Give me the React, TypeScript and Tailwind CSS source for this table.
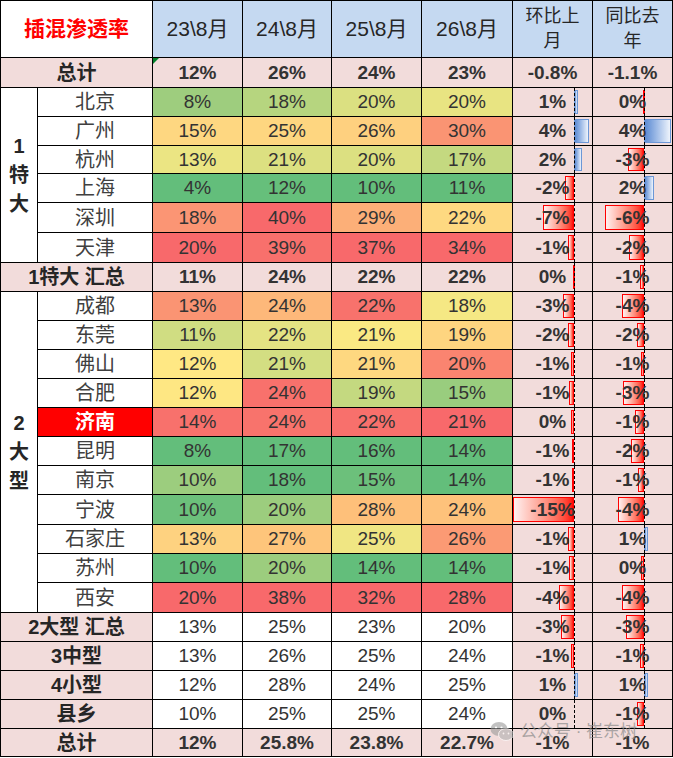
import React from 'react';

type Row = {
  label: string;
  vals: string[];
  colors?: string[];
  mom: string;
  yoy: string;
  momBar?: number;
  yoyBar?: number;
  h: number;
  red?: boolean;
};

// axis positions inside the two change columns (px from cell left)
const MOM_AXIS = 61;
const YOY_AXIS = 51;

const special: Row[] = [
  { label: '北京', vals: ['8%', '18%', '20%', '20%'], colors: ['#9ecd7e', '#b6d57f', '#dbe081', '#e8e482'], mom: '1%', yoy: '0%', momBar: 4, yoyBar: -1, h: 29 },
  { label: '广州', vals: ['15%', '25%', '26%', '30%'], colors: ['#fed781', '#fed680', '#fed07f', '#fa9473'], mom: '4%', yoy: '4%', momBar: 15, yoyBar: 27, h: 29 },
  { label: '杭州', vals: ['13%', '21%', '20%', '17%'], colors: ['#ebe583', '#dce081', '#dce081', '#c4d980'], mom: '2%', yoy: '-3%', momBar: 8, yoyBar: -16, h: 28 },
  { label: '上海', vals: ['4%', '12%', '10%', '11%'], colors: ['#63be7b', '#66bf7b', '#63be7b', '#63be7b'], mom: '-2%', yoy: '2%', momBar: -9, yoyBar: 10, h: 29 },
  { label: '深圳', vals: ['18%', '40%', '29%', '22%'], colors: ['#fb9574', '#f8696b', '#fcaf78', '#fed981'], mom: '-7%', yoy: '-6%', momBar: -31, yoyBar: -39, h: 30 },
  { label: '天津', vals: ['20%', '39%', '37%', '34%'], colors: ['#f8696b', '#f8706c', '#f8696b', '#f8696b'], mom: '-1%', yoy: '-2%', momBar: -6, yoyBar: -15, h: 30 },
];

const large: Row[] = [
  { label: '成都', vals: ['13%', '24%', '22%', '18%'], colors: ['#fa9473', '#fdb87a', '#f8726c', '#f5e884'], mom: '-3%', yoy: '-4%', momBar: -11, yoyBar: -22, h: 29 },
  { label: '东莞', vals: ['11%', '22%', '21%', '19%'], colors: ['#d0dd82', '#e4e383', '#fae983', '#fed580'], mom: '-2%', yoy: '-2%', momBar: -6, yoyBar: -7, h: 29 },
  { label: '佛山', vals: ['12%', '21%', '21%', '20%'], colors: ['#ffe884', '#d3de82', '#fed880', '#fa8470'], mom: '-1%', yoy: '-1%', momBar: -3, yoyBar: -3, h: 29 },
  { label: '合肥', vals: ['12%', '24%', '19%', '15%'], colors: ['#fee783', '#f8716c', '#c4d980', '#99cd7e'], mom: '-1%', yoy: '-3%', momBar: -5, yoyBar: -21, h: 29 },
  { label: '济南', vals: ['14%', '24%', '22%', '21%'], colors: ['#f8716c', '#f8736c', '#f8706c', '#f8696b'], mom: '0%', yoy: '-1%', momBar: -3, yoyBar: -9, h: 29, red: true },
  { label: '昆明', vals: ['8%', '17%', '16%', '14%'], colors: ['#63be7b', '#63be7b', '#63be7b', '#63be7b'], mom: '-1%', yoy: '-2%', momBar: -2, yoyBar: -13, h: 29 },
  { label: '南京', vals: ['10%', '18%', '15%', '14%'], colors: ['#9ccd7e', '#63be7b', '#6cc07b', '#63be7b'], mom: '-1%', yoy: '-1%', momBar: -2, yoyBar: -6, h: 29 },
  { label: '宁波', vals: ['10%', '20%', '28%', '24%'], colors: ['#6cc07b', '#9ccd7e', '#fec07a', '#fec27b'], mom: '-15%', yoy: '-4%', momBar: -61, yoyBar: -26, h: 30 },
  { label: '石家庄', vals: ['13%', '27%', '25%', '26%'], colors: ['#fed280', '#fec57b', '#f0e683', '#fb9a74'], mom: '-1%', yoy: '1%', momBar: -6, yoyBar: 4, h: 29 },
  { label: '苏州', vals: ['10%', '20%', '14%', '14%'], colors: ['#63be7b', '#9ccd7e', '#63be7b', '#63be7b'], mom: '-1%', yoy: '0%', momBar: -5, yoyBar: -3, h: 29 },
  { label: '西安', vals: ['20%', '38%', '32%', '28%'], colors: ['#f8696b', '#f8696b', '#f8696b', '#f8696b'], mom: '-4%', yoy: '-4%', momBar: -15, yoyBar: -22, h: 30 },
];

const lower: Row[] = [
  { label: '2大型 汇总', vals: ['13%', '25%', '23%', '20%'], mom: '-3%', yoy: '-3%', momBar: -13, yoyBar: -18, h: 29 },
  { label: '3中型', vals: ['13%', '26%', '25%', '24%'], mom: '-1%', yoy: '-1%', momBar: -3, yoyBar: -4, h: 29 },
  { label: '4小型', vals: ['12%', '28%', '24%', '25%'], mom: '1%', yoy: '1%', momBar: 4, yoyBar: 4, h: 29 },
  { label: '县乡', vals: ['10%', '25%', '25%', '24%'], mom: '0%', yoy: '-1%', momBar: 0, yoyBar: -7, h: 29 },
];

function BarCell({ text, bar, axis }: { text: string; bar?: number; axis?: number }) {
  return (
    <td className="relative border border-black bg-[#f2dcdb] p-0 text-center text-[19px] leading-[20px] font-bold text-[#333]">
      {axis !== undefined && bar !== undefined && bar < 0 && (
        <div
          className="absolute top-[2px] bottom-[2px] border border-[#ff0000] bg-linear-to-r from-[#fff0f0] to-[#ff0000]"
          style={{ left: axis + bar, width: -bar }}
        />
      )}
      {axis !== undefined && bar !== undefined && bar > 0 && (
        <div
          className="absolute top-[2px] bottom-[2px] border border-[#6c97d6] bg-linear-to-r from-[#5b8ad2] to-[#eef3fb]"
          style={{ left: axis, width: bar }}
        />
      )}
      {axis !== undefined && (
        <div className="absolute top-0 bottom-0 w-0 border-l border-dashed border-black" style={{ left: axis }} />
      )}
      <span className="relative">{text}</span>
    </td>
  );
}

function ValueCells({ row, bold }: { row: Row; bold?: boolean }) {
  return (
    <>
      {row.vals.map((v, i) => (
        <td
          key={i}
          className={`border border-black p-0 text-center text-[19px] leading-[20px] text-[#333] ${bold ? 'font-bold' : ''}`}
          style={{ backgroundColor: row.colors ? row.colors[i] : bold ? '#f2dcdb' : '#ffffff' }}
        >
          {v}
        </td>
      ))}
      <BarCell text={row.mom} bar={row.momBar} axis={row.momBar !== undefined ? MOM_AXIS : undefined} />
      <BarCell text={row.yoy} bar={row.yoyBar} axis={row.yoyBar !== undefined ? YOY_AXIS : undefined} />
    </>
  );
}

function CityRow({ row, group }: { row: Row; group?: React.ReactNode }) {
  return (
    <tr style={{ height: row.h }}>
      {group}
      <td
        className={`border border-black p-0 text-center text-[20px] leading-[22px] ${
          row.red ? 'bg-[#ff0000] font-bold text-white' : 'bg-white text-[#404040]'
        }`}
      >
        {row.label}
      </td>
      <ValueCells row={row} />
    </tr>
  );
}

function SumRow({ row, bold }: { row: Row; bold?: boolean }) {
  return (
    <tr style={{ height: row.h }}>
      <td colSpan={2} className="border border-black bg-[#f2dcdb] p-0 text-center text-[20px] leading-[22px] font-bold text-[#262626]">
        {row.label}
      </td>
      <ValueCells row={row} bold={bold} />
    </tr>
  );
}

function GroupCell({ span, lines }: { span: number; lines: string[] }) {
  return (
    <td rowSpan={span} className="border border-black bg-white p-0 text-center align-middle text-[20px] font-bold leading-[29px] text-[#262626]">
      {lines.map((l) => (
        <div key={l}>{l}</div>
      ))}
    </td>
  );
}

export default function App() {
  const total1: Row = { label: '总计', vals: ['12%', '26%', '24%', '23%'], mom: '-0.8%', yoy: '-1.1%', h: 30 };
  const sum1: Row = { label: '1特大 汇总', vals: ['11%', '24%', '22%', '22%'], mom: '0%', yoy: '-1%', momBar: -1, yoyBar: -4, h: 29 };
  const total2: Row = { label: '总计', vals: ['12%', '25.8%', '23.8%', '22.7%'], mom: '-1%', yoy: '-1%', h: 28 };

  return (
    <div className="relative h-[758px] w-[673px] overflow-hidden bg-white font-['Liberation_Sans','Noto_Sans_CJK_SC',sans-serif]">
      <table className="w-[672px] table-fixed border-collapse">
        <colgroup>
          <col className="w-[37px]" />
          <col className="w-[115px]" />
          <col className="w-[90px]" />
          <col className="w-[89px]" />
          <col className="w-[90px]" />
          <col className="w-[91px]" />
          <col className="w-[80px]" />
          <col className="w-[80px]" />
        </colgroup>
        <tbody>
          <tr className="h-[57px]">
            <td colSpan={2} className="border border-black bg-white p-0 text-center text-[21px] leading-[24px] font-bold text-[#ff0000]">
              插混渗透率
            </td>
            {['23\\8月', '24\\8月', '25\\8月', '26\\8月'].map((h) => (
              <td key={h} className="border border-black bg-[#c5d9f1] p-0 text-center text-[21px] leading-[24px] text-[#262626]">
                {h}
              </td>
            ))}
            <td className="border border-black bg-[#c5d9f1] p-0 text-center text-[18px] leading-[25px] text-[#262626]">
              环比上
              <br />月
            </td>
            <td className="border border-black bg-[#c5d9f1] p-0 text-center text-[18px] leading-[25px] text-[#262626]">
              同比去
              <br />年
            </td>
          </tr>
          <SumRow row={total1} bold />
          {special.map((r, i) => (
            <CityRow key={r.label} row={r} group={i === 0 ? <GroupCell span={6} lines={['1', '特', '大']} /> : undefined} />
          ))}
          <SumRow row={sum1} bold />
          {large.map((r, i) => (
            <CityRow key={r.label} row={r} group={i === 0 ? <GroupCell span={11} lines={['2', '大', '型']} /> : undefined} />
          ))}
          {lower.map((r) => (
            <SumRow key={r.label} row={r} />
          ))}
          <SumRow row={total2} bold />
        </tbody>
      </table>

      {/* green corner mark */}
      <div className="absolute left-[153px] top-[58px] h-0 w-0 border-r-[6px] border-t-[6px] border-r-transparent border-t-[#00802b]" />

      {/* watermark */}
      <div className="pointer-events-none absolute left-[490px] top-[721px] flex items-center gap-[6px] text-[17px] leading-[20px] text-[#8a8a8a]/70">
        <svg width="24" height="21" viewBox="0 0 24 21" className="opacity-60">
          <ellipse cx="9" cy="8" rx="8.5" ry="7" fill="#9a9a9a" />
          <ellipse cx="16" cy="13.5" rx="7.5" ry="6" fill="#b0b0b0" stroke="#fff" strokeWidth="1" />
          <circle cx="6" cy="6.5" r="1.1" fill="#fff" />
          <circle cx="11.5" cy="6.5" r="1.1" fill="#fff" />
          <circle cx="13.5" cy="12.5" r="0.9" fill="#fff" />
          <circle cx="18.5" cy="12.5" r="0.9" fill="#fff" />
        </svg>
        <span>公众号 · 崔东树</span>
      </div>
    </div>
  );
}
